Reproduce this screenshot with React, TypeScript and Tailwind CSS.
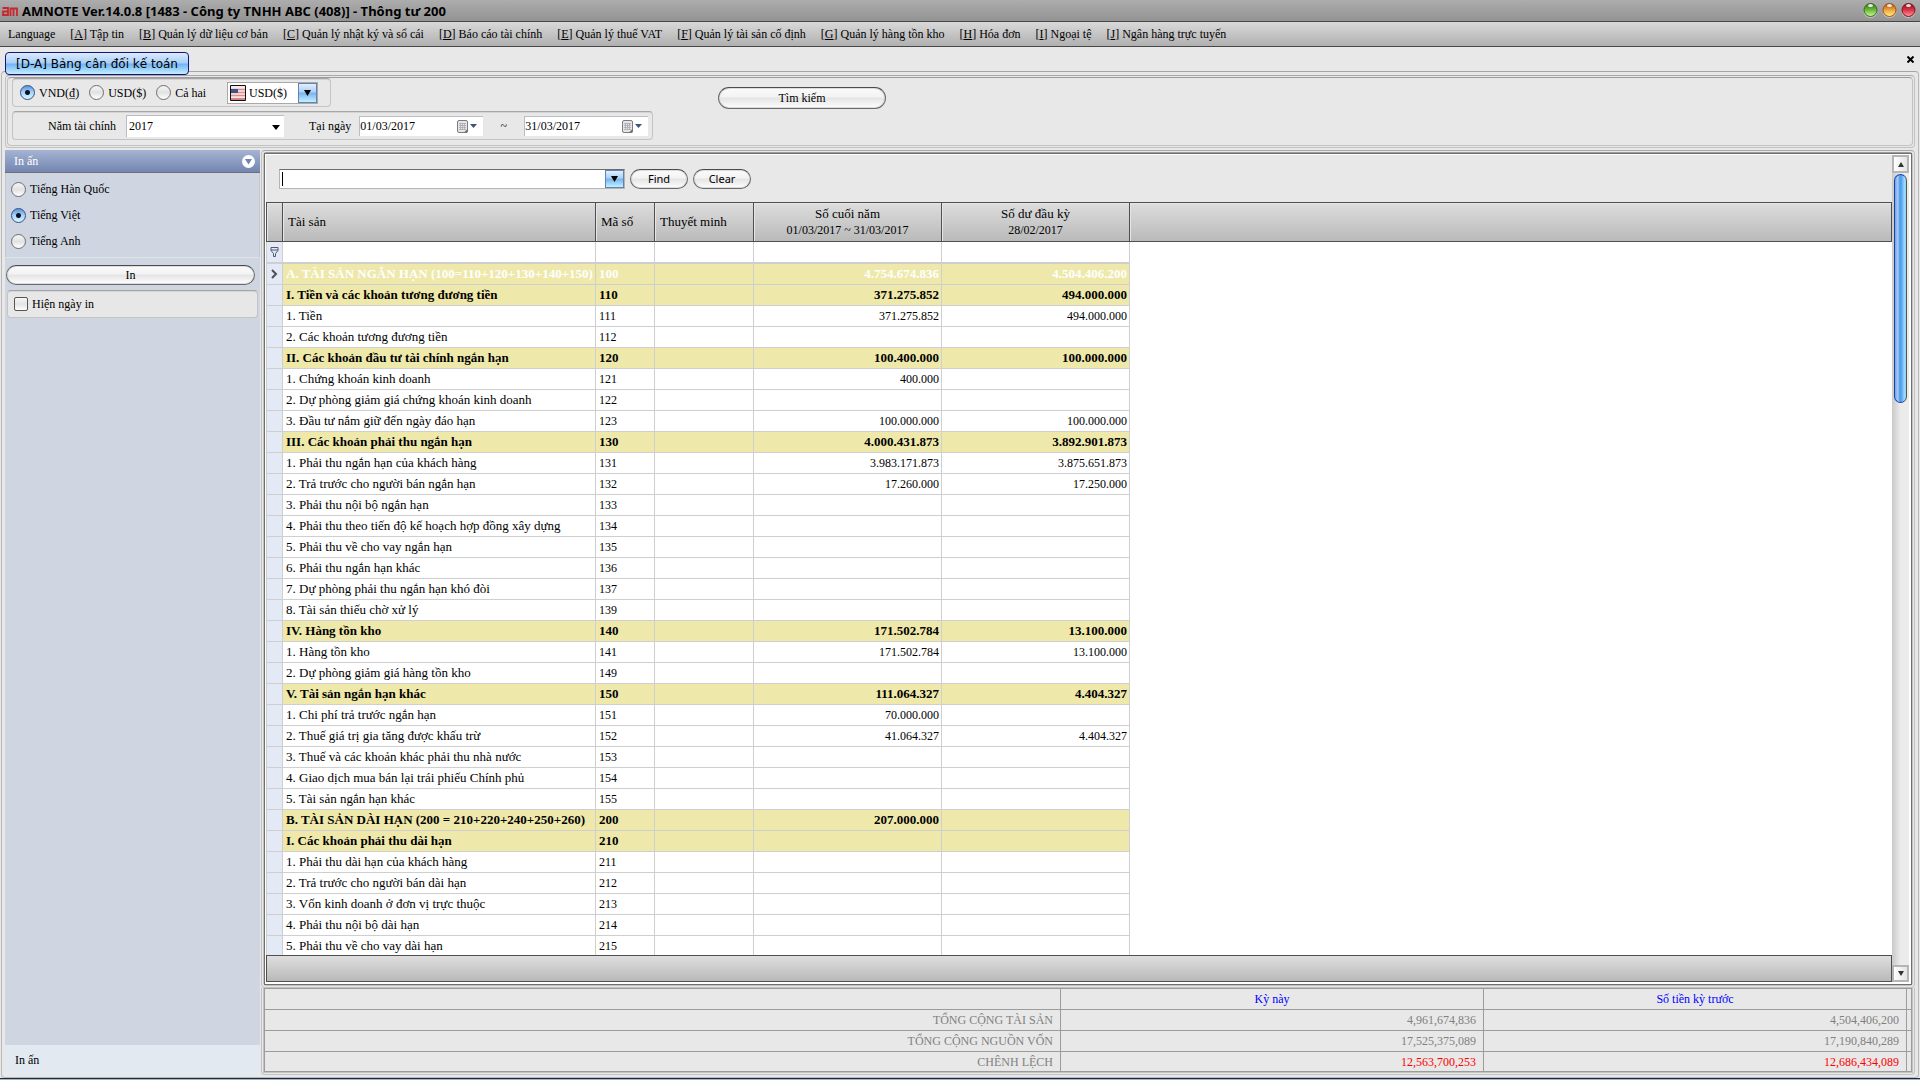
import React, { useState } from 'react';

type Row = {
  name: string;
  code: string;
  current?: string;
  opening?: string;
  group?: boolean;
  selected?: boolean;
};

const MENU = [
  { key: '', label: 'Language' },
  { key: 'A', label: 'Tập tin' },
  { key: 'B', label: 'Quản lý dữ liệu cơ bản' },
  { key: 'C', label: 'Quản lý nhật ký và sổ cái' },
  { key: 'D', label: 'Báo cáo tài chính' },
  { key: 'E', label: 'Quản lý thuế VAT' },
  { key: 'F', label: 'Quản lý tài sản cố định' },
  { key: 'G', label: 'Quản lý hàng tồn kho' },
  { key: 'H', label: 'Hóa đơn' },
  { key: 'I', label: 'Ngoại tệ' },
  { key: 'J', label: 'Ngân hàng trực tuyến' },
];

const ROWS: Row[] = [
  { name: 'A. TÀI SẢN NGẮN HẠN (100=110+120+130+140+150)', code: '100', current: '4.754.674.836', opening: '4.504.406.200', group: true, selected: true },
  { name: 'I. Tiền và các khoản tương đương tiền', code: '110', current: '371.275.852', opening: '494.000.000', group: true },
  { name: '1. Tiền', code: '111', current: '371.275.852', opening: '494.000.000' },
  { name: '2. Các khoản tương đương tiền', code: '112' },
  { name: 'II. Các khoản đầu tư tài chính ngắn hạn', code: '120', current: '100.400.000', opening: '100.000.000', group: true },
  { name: '1. Chứng khoán kinh doanh', code: '121', current: '400.000' },
  { name: '2. Dự phòng giảm giá chứng khoán kinh doanh', code: '122' },
  { name: '3. Đầu tư nắm giữ đến ngày đáo hạn', code: '123', current: '100.000.000', opening: '100.000.000' },
  { name: 'III. Các khoản phải thu ngắn hạn', code: '130', current: '4.000.431.873', opening: '3.892.901.873', group: true },
  { name: '1. Phải thu ngắn hạn của khách hàng', code: '131', current: '3.983.171.873', opening: '3.875.651.873' },
  { name: '2. Trả trước cho người bán ngắn hạn', code: '132', current: '17.260.000', opening: '17.250.000' },
  { name: '3. Phải thu nội bộ ngắn hạn', code: '133' },
  { name: '4. Phải thu theo tiến độ kế hoạch hợp đồng xây dựng', code: '134' },
  { name: '5. Phải thu về cho vay ngắn hạn', code: '135' },
  { name: '6. Phải thu ngắn hạn khác', code: '136' },
  { name: '7. Dự phòng phải thu ngắn hạn khó đòi', code: '137' },
  { name: '8. Tài sản thiếu chờ xử lý', code: '139' },
  { name: 'IV. Hàng tồn kho', code: '140', current: '171.502.784', opening: '13.100.000', group: true },
  { name: '1. Hàng tồn kho', code: '141', current: '171.502.784', opening: '13.100.000' },
  { name: '2. Dự phòng giảm giá hàng tồn kho', code: '149' },
  { name: 'V. Tài sản ngắn hạn khác', code: '150', current: '111.064.327', opening: '4.404.327', group: true },
  { name: '1. Chi phí trả trước ngắn hạn', code: '151', current: '70.000.000' },
  { name: '2. Thuế giá trị gia tăng được khấu trừ', code: '152', current: '41.064.327', opening: '4.404.327' },
  { name: '3. Thuế và các khoản khác phải thu nhà nước', code: '153' },
  { name: '4. Giao dịch mua bán lại trái phiếu Chính phủ', code: '154' },
  { name: '5. Tài sản ngắn hạn khác', code: '155' },
  { name: 'B. TÀI SẢN DÀI HẠN (200 = 210+220+240+250+260)', code: '200', current: '207.000.000', group: true },
  { name: 'I. Các khoản phải thu dài hạn', code: '210', group: true },
  { name: '1. Phải thu dài hạn của khách hàng', code: '211' },
  { name: '2. Trả trước cho người bán dài hạn', code: '212' },
  { name: '3. Vốn kinh doanh ở đơn vị trực thuộc', code: '213' },
  { name: '4. Phải thu nội bộ dài hạn', code: '214' },
  { name: '5. Phải thu về cho vay dài hạn', code: '215' },
];

const TOTALS = [
  { label: 'TỔNG CỘNG TÀI SẢN', current: '4,961,674,836', previous: '4,504,406,200' },
  { label: 'TỔNG CỘNG NGUỒN VỐN', current: '17,525,375,089', previous: '17,190,840,289' },
  { label: 'CHÊNH LỆCH', current: '12,563,700,253', previous: '12,686,434,089', red: true },
];

const LANGUAGES = ['Tiếng Hàn Quốc', 'Tiếng Việt', 'Tiếng Anh'];

const pill =
  'rounded-full border border-[#6a6a6a] border-t-[#4c4c4c] bg-[linear-gradient(to_bottom,#fbfbfb_0%,#f3f3f3_45%,#e4e4e4_50%,#fefefe_100%)] shadow-[inset_0_0_0_1px_#dcdcdc] text-center text-black';

const groupBox = 'rounded-sm border border-[#c4c4c4] border-t-[#a6a6a6] shadow-[inset_0_1px_0_#d4d4d4]';

const blueButton =
  'border border-[#5f83b3] bg-[linear-gradient(to_bottom,#e2effc_0%,#aacff5_45%,#76b3ee_50%,#c4f0ff_100%)]';

function Frame({ className = '', children }: { className?: string; children: React.ReactNode }) {
  return (
    <div className={`rounded-sm border border-[#c2c2c2] border-t-[#a9a9a9] p-px ${className}`}>
      <div className="flex min-h-0 min-w-0 flex-1 flex-col rounded-sm border border-[#c2c2c2] border-t-[#9c9c9c]">{children}</div>
    </div>
  );
}

type RadioProps = { name: string; label: string; checked: boolean; onChange: () => void };

function Radio({ name, label, checked, onChange }: RadioProps) {
  return (
    <label className="flex items-center gap-1 whitespace-nowrap">
      <input
        type="radio"
        name={name}
        checked={checked}
        onChange={onChange}
        className="size-[15px] shrink-0 appearance-none rounded-full border border-[#6e6e6e] bg-[linear-gradient(to_bottom,#f6f6f6,#e2e2e2_50%,#ffffff)] checked:border-[#34507e] checked:bg-[radial-gradient(circle_at_50%_50%,#0a1420_0,#0a1420_2px,transparent_3px),linear-gradient(to_bottom,#5d95dd,#a9d4fa_50%,#d8f6ff)]"
      />
      {label}
    </label>
  );
}

function DateBox({ id, value }: { id: string; value: string }) {
  return (
    <div className="flex h-5 w-[124px] items-center border-t border-l border-[#b9bec6] bg-white pr-1.5">
      <input id={id} aria-label={id} defaultValue={value} className="w-0 flex-1 bg-transparent outline-none" />
      <button aria-label="Lịch" className="flex items-center gap-0.5">
        <svg width="11" height="13" viewBox="0 0 11 13">
          <rect x="0.5" y="0.5" width="10" height="12" rx="1.5" fill="#e6e6e6" stroke="#7d7a80" />
          <path d="M2 3.5h7M2 5.5h7M2 7.5h7M2 9.5h7M3.5 3v7M5.5 3v7M7.5 3v7" stroke="#a9abb5" strokeWidth="0.8" />
          <path d="M7 12.5l3.5-3.5v3.5z" fill="#6f6c72" />
        </svg>
        <svg width="7" height="4" viewBox="0 0 7 4">
          <path d="M0 0h7L3.500 4z" fill="#3e5379" />
        </svg>
      </button>
    </div>
  );
}

function FlagIcon() {
  return (
    <svg className="pointer-events-none absolute top-0.5 left-0.5" width="16" height="16" viewBox="0 0 16 16">
      <rect width="16" height="16" rx="1" fill="#111" />
      <rect x="1" y="1" width="14" height="14" fill="#f7e9e9" />
      <path d="M1 4.500h14M1 7.500h14M1 10.500h14" stroke="#e08a8a" strokeWidth="1.500" />
      <rect x="1" y="13" width="14" height="2" fill="#d98080" />
      <rect x="1" y="4" width="7" height="4" fill="#3c5687" />
    </svg>
  );
}

function Orb({ label, dark, mid, light }: { label: string; dark: string; mid: string; light: string }) {
  return (
    <button aria-label={label}>
      <svg width="15" height="15" viewBox="0 0 15 15">
        <defs>
          <linearGradient id={label} x1="0" y1="0" x2="0" y2="1">
            <stop offset="0" stopColor={dark} />
            <stop offset="0.5" stopColor={mid} />
            <stop offset="1" stopColor={light} />
          </linearGradient>
        </defs>
        <circle cx="7.500" cy="8" r="7" fill="#c4c4c4" />
        <circle cx="7.500" cy="7" r="6.500" fill={`url(#${label})`} stroke={dark} />
        <ellipse cx="7.500" cy="2.500" rx="2.500" ry="1.500" fill="#fff" opacity="0.85" />
      </svg>
    </button>
  );
}

function TitleBar() {
  return (
    <header className="flex h-[22px] shrink-0 items-center justify-between border-b border-[#474747] bg-linear-to-b from-[#adadad] to-[#939393] pr-1 pl-0.5">
      <h1 className="flex items-center gap-1 pt-0.5 font-['Noto_Sans',sans-serif] text-[13px] font-bold text-black">
        <svg width="16" height="9" viewBox="0 0 16 9" fill="none" stroke="#c8272d" strokeWidth="1.800">
          <path d="M0.500 1H6v7H1V4.500h5" />
          <path d="M8.500 9V1.500h3V9M11.500 1.500h3.500V9" />
        </svg>
        AMNOTE Ver.14.0.8 [1483 - Công ty TNHH ABC (408)] - Thông tư 200
      </h1>
      <div className="flex gap-1">
        <Orb label="minimize" dark="#2f6b1c" mid="#6cbb3c" light="#d2f59a" />
        <Orb label="maximize" dark="#a34c12" mid="#f0a63a" light="#fff08a" />
        <Orb label="close" dark="#7c0f1b" mid="#dd3348" light="#ff9aa2" />
      </div>
    </header>
  );
}

function MenuBar() {
  return (
    <nav className="flex h-[25px] shrink-0 items-center gap-[15px] border-b border-[#474747] bg-linear-to-b from-[#d9d9d9] to-[#b0b0b0] px-2">
      {MENU.map((item) => (
        <a key={item.label} href="#" className="whitespace-nowrap">
          {item.key && (
            <>
              [<span className="underline">{item.key}</span>]{' '}
            </>
          )}
          {item.label}
        </a>
      ))}
    </nav>
  );
}

function SearchPanel() {
  const [currency, setCurrency] = useState('VND(₫)');

  return (
    <Frame className="flex h-[73px] shrink-0">
      <div className="flex px-1">
        <div className="flex w-[641px] flex-col gap-1">
          <div className={`flex h-[29px] w-[319px] items-center ${groupBox} pl-[7px]`}>
            <div className="flex w-[207px] gap-2.5">
              {['VND(₫)', 'USD($)', 'Cả hai'].map((c) => (
                <Radio key={c} name="currency" label={c} checked={currency === c} onChange={() => setCurrency(c)} />
              ))}
            </div>
            <div className="relative h-[22px] w-[91px] border border-[#a9a9a9] bg-white">
              <FlagIcon />
              <select aria-label="Ngoại tệ" className="h-full w-full appearance-none bg-transparent pl-[21px] outline-none">
                <option>USD($)</option>
              </select>
              <span className={`pointer-events-none absolute inset-y-0 right-0 flex w-[19px] items-center justify-center ${blueButton}`}>
                <svg width="7" height="6" viewBox="0 0 7 6">
                  <path d="M0 0h7L3.500 6z" />
                </svg>
              </span>
            </div>
          </div>
          <div className={`flex h-[29px] w-full items-center ${groupBox}`}>
            <label htmlFor="year" className="w-[103px] text-right">
              Năm tài chính
            </label>
            <div className="relative ml-2.5 h-[22px] w-[158px] border-t border-l border-[#b9bec6] bg-white">
              <select id="year" className="h-full w-full appearance-none bg-transparent pl-0.5 outline-none">
                <option>2017</option>
              </select>
              <svg className="pointer-events-none absolute top-[9px] right-1" width="8" height="5" viewBox="0 0 8 5">
                <path d="M0 0h8L4 5z" />
              </svg>
            </div>
            <label htmlFor="from" className="mr-2 ml-[25px]">
              Tại ngày
            </label>
            <DateBox id="from" value="01/03/2017" />
            <span className="w-[41px] text-center">~</span>
            <DateBox id="to" value="31/03/2017" />
          </div>
        </div>
        <button className={`mt-[9px] ml-[65px] h-[22px] w-[168px] ${pill}`}>Tìm kiếm</button>
      </div>
    </Frame>
  );
}

function Sidebar() {
  const [lang, setLang] = useState('Tiếng Việt');

  return (
    <aside className="flex w-[255px] shrink-0 flex-col bg-[#cfd6e2]">
      <div className="flex h-[23px] items-center justify-between border-b border-[#6f6f78] bg-linear-to-b from-[#a5b4d3] to-[#7486b0] pr-[5px] pl-[9px] text-white">
        In ấn
        <button aria-label="Thu gọn">
          <svg width="13" height="13" viewBox="0 0 13 13">
            <circle cx="6.500" cy="6.500" r="6.500" fill="#fff" />
            <path d="M3 4h7L6.500 9.500z" fill="#6f83b0" />
          </svg>
        </button>
      </div>
      <div className="flex flex-col gap-2.5 border-x border-b border-[#c3c7cf] border-b-[#dfe2e8] px-[5px] py-2">
        {LANGUAGES.map((l) => (
          <Radio key={l} name="lang" label={l} checked={lang === l} onChange={() => setLang(l)} />
        ))}
      </div>
      <button className={`mt-[7px] mr-[5px] ml-px h-5 ${pill}`}>In</button>
      <label className={`mx-0.5 mt-[5px] flex h-7 items-center gap-1 bg-[#e7e7e7] px-1.5 ${groupBox}`}>
        <input
          type="checkbox"
          className="size-3.5 appearance-none rounded-xs border border-[#555] bg-[linear-gradient(to_bottom,#f8f8f8,#e4e4e4_50%,#fdfdfd)]"
        />
        Hiện ngày in
      </label>
      <div className="mt-auto flex h-[30px] items-center bg-[#e2e9f1] pl-2.5">In ấn</div>
    </aside>
  );
}

function FindBar() {
  return (
    <div className="flex h-[47px] shrink-0 items-center gap-[5px] bg-[#e8e8e8] pt-px pl-[13px]">
      <div className="flex h-5 w-[346px] border border-[#b5b5b5] border-t-[#6c6c6c] bg-white">
        <span className="my-0.5 ml-0.5 w-px bg-black"></span>
        <input aria-label="Tìm" className="w-0 flex-1 bg-transparent outline-none" />
        <button aria-label="Mở danh sách" className={`flex w-[19px] items-center justify-center ${blueButton}`}>
          <svg width="7" height="6" viewBox="0 0 7 6">
            <path d="M0 0h7L3.500 6z" />
          </svg>
        </button>
      </div>
      <button className={`h-5 w-[58px] font-['Noto_Sans',sans-serif] text-[11px] ${pill}`}>Find</button>
      <button className={`h-5 w-[58px] font-['Noto_Sans',sans-serif] text-[11px] ${pill}`}>Clear</button>
    </div>
  );
}

function BalanceTable() {
  const th = 'h-10 border-y border-r border-[#4f4f4f] px-[5px] font-normal shadow-[inset_1px_1px_0_#e6e6e6]';
  const gutter = 'border-r border-b border-l border-[#cfcfcf] bg-[#e3e9f5]';

  return (
    <table className="w-full table-fixed border-separate border-spacing-0 text-[13px] leading-4">
      <colgroup>
        <col className="w-[17px]" />
        <col className="w-[313px]" />
        <col className="w-[59px]" />
        <col className="w-[99px]" />
        <col className="w-[188px]" />
        <col className="w-[188px]" />
        <col />
      </colgroup>
      <thead>
        <tr className="bg-linear-to-b from-[#dedede] to-[#b9b9b9] text-left">
          <th className={`border-l ${th}`}></th>
          <th className={th}>Tài sản</th>
          <th className={th}>Mã số</th>
          <th className={th}>Thuyết minh</th>
          <th className={`text-center ${th}`}>
            Số cuối năm
            <div className="text-xs leading-4">01/03/2017 ~ 31/03/2017</div>
          </th>
          <th className={`text-center ${th}`}>
            Số dư đầu kỳ
            <div className="text-xs leading-4">28/02/2017</div>
          </th>
          <th className={th}></th>
        </tr>
      </thead>
      <tbody>
        <tr className="h-[22px]">
          <td className="border-r border-b-2 border-l border-[#cfcfcf] bg-[#e3e9f5]">
            <svg className="mx-auto" width="9" height="10" viewBox="0 0 9 10" fill="none" stroke="#4e5a72">
              <path d="M1 0.500h7v3L5.500 6.500v3h-2v-3L1 3.500zM1 3h7" />
            </svg>
          </td>
          {[0, 1, 2, 3, 4].map((i) => (
            <td key={i} className="border-r border-b-2 border-[#cfcfcf]"></td>
          ))}
          <td></td>
        </tr>
        {ROWS.map((row) => {
          const tone = row.selected
            ? 'bg-[#eee8aa] font-bold text-white'
            : row.group
              ? 'bg-[#eee8aa] font-bold'
              : 'bg-white';
          const td = `border-r border-b border-[#cfcfcf] whitespace-nowrap ${tone}`;
          const num = `text-right pr-0.5 ${row.group ? '' : 'text-xs leading-4'} ${td}`;
          return (
            <tr key={row.code} className="h-[21px]">
              <td className={gutter}>
                {row.selected && (
                  <svg className="mx-auto" width="7" height="10" viewBox="0 0 7 10" fill="none" stroke="#4b4f5c" strokeWidth="2">
                    <path d="M1 1l4 4-4 4" />
                  </svg>
                )}
              </td>
              <td className={`pl-[3px] ${td}`}>{row.name}</td>
              <td className={`pl-[3px] ${row.group ? '' : 'text-xs leading-4'} ${td}`}>{row.code}</td>
              <td className={td}></td>
              <td className={num}>{row.current}</td>
              <td className={num}>{row.opening}</td>
              <td></td>
            </tr>
          );
        })}
      </tbody>
    </table>
  );
}

function ScrollBar() {
  const arrow = 'flex shrink-0 items-center justify-center border-2 border-[#b5b5b5] bg-linear-to-r from-white to-[#e4e4e4]';
  return (
    <div className="flex w-[17px] shrink-0 flex-col bg-linear-to-r from-[#c9c9c9] via-[#ebebeb] to-[#ececec]">
      <button aria-label="Cuộn lên" className={`h-[18px] ${arrow}`}>
        <svg width="6" height="5" viewBox="0 0 6 5">
          <path d="M3 0l3 5H0z" fill="#333" />
        </svg>
      </button>
      <div className="flex-1 pt-px pl-0.5">
        <div className="h-[29%] w-[13px] rounded-full border border-[#1a3fae] border-r-[#555] bg-[linear-gradient(to_right,#6fa4e6_0,#a8cdf2_25%,#4d97ee_45%,#5aa6f2_60%,#9adcfb_85%,#8fd2f5)]"></div>
      </div>
      <button aria-label="Cuộn xuống" className={`h-[17px] ${arrow}`}>
        <svg width="6" height="5" viewBox="0 0 6 5">
          <path d="M0 0h6L3 5z" fill="#333" />
        </svg>
      </button>
    </div>
  );
}

function Totals() {
  const line = 'border-r border-b border-[#9c9c9c]';
  return (
    <table className="w-full table-fixed border-separate border-spacing-0 border-t border-l border-[#9c9c9c] text-xs">
      <colgroup>
        <col />
        <col className="w-[423px]" />
        <col className="w-[423px]" />
        <col className="w-[5px]" />
      </colgroup>
      <thead>
        <tr className="h-[21px] text-[#0000ff]">
          <th className={line}></th>
          <th className={`font-normal ${line}`}>Kỳ này</th>
          <th className={`font-normal ${line}`}>Số tiền kỳ trước</th>
          <th className={line}></th>
        </tr>
      </thead>
      <tbody>
        {TOTALS.map((t) => (
          <tr key={t.label} className={`text-right text-[#808080] ${t.red ? 'h-5' : 'h-[21px]'}`}>
            <td className={`pr-[7px] ${line}`}>{t.label}</td>
            <td className={`pr-[7px] ${line} ${t.red ? 'text-[#ff0000]' : ''}`}>{t.current}</td>
            <td className={`pr-[7px] ${line} ${t.red ? 'text-[#ff0000]' : ''}`}>{t.previous}</td>
            <td className={line}></td>
          </tr>
        ))}
      </tbody>
    </table>
  );
}

export default function App() {
  return (
    <div className="flex h-screen flex-col overflow-hidden bg-[#e8e8e8] font-['Liberation_Serif',serif] text-xs text-black">
      <TitleBar />
      <MenuBar />

      {/* Open document tabs */}
      <div className="flex h-6 shrink-0 items-start justify-between pr-1.5 pl-[5px]">
        <button className="relative z-10 mt-[5px] h-[23px] rounded-sm border border-[#14147a] bg-[linear-gradient(to_bottom,#dbeafc_0%,#a9cff8_48%,#72b2f3_52%,#c2efff_100%)] px-2.5 font-['DejaVu_Sans',sans-serif] text-xs whitespace-nowrap">
          [D-A] Bảng cân đối kế toán
        </button>
        <button aria-label="Đóng" className="mt-[9px]">
          <svg width="7" height="7" viewBox="0 0 7 7" stroke="#000" strokeWidth="2">
            <path d="M0.500 0.500l6 6M6.500 0.500l-6 6" />
          </svg>
        </button>
      </div>

      <main className="mx-px flex min-h-0 flex-1 flex-col gap-0.5 rounded-sm border border-[#b9b9b9] border-t-[#a5a5a5] p-[3px] pb-0.5">
        <SearchPanel />
        <div className="flex min-h-0 flex-1 gap-px">
          <Sidebar />
          <div className="flex min-w-0 flex-1 flex-col">
            <Frame className="flex min-h-0 flex-1">
              <div className="flex min-h-0 flex-1 border border-[#6f6f6f] bg-white p-px pr-0.5 pb-0.5">
                <div className="flex min-w-0 flex-1 flex-col">
                  <FindBar />
                  <div className="min-h-0 flex-1 overflow-hidden">
                    <BalanceTable />
                  </div>
                  <div className="h-[27px] shrink-0 border border-[#4f4f4f] bg-linear-to-b from-[#dedede] to-[#b9b9b9]"></div>
                </div>
                <ScrollBar />
              </div>
            </Frame>
            <div className="shrink-0 rounded-b-sm border-x border-b border-[#c2c2c2] px-px pb-px">
              <div className="border-x border-b border-[#c2c2c2]">
                <Totals />
              </div>
            </div>
          </div>
        </div>
      </main>
      <div className="h-0.5 shrink-0 border-t border-[#1e2a3a] bg-[#9db4cc]"></div>
    </div>
  );
}
